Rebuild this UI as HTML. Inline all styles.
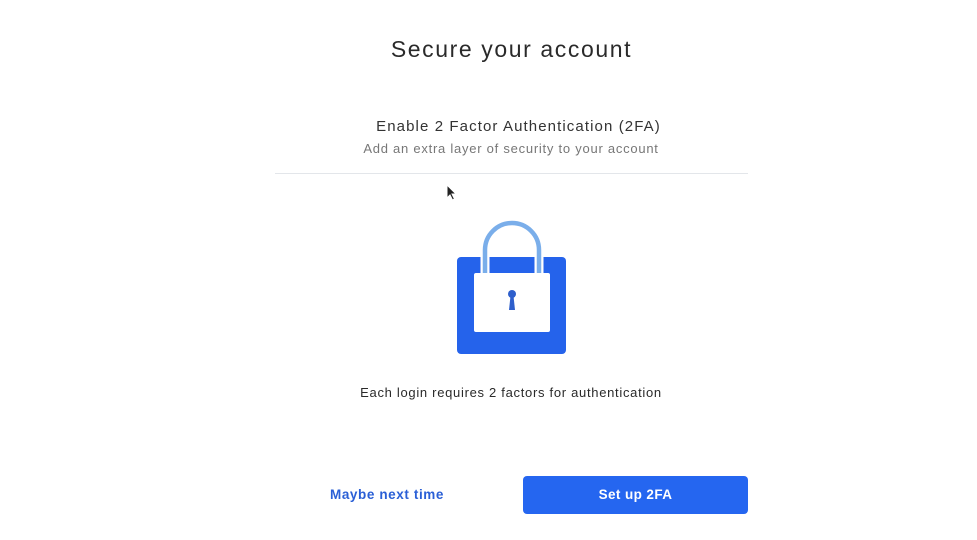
<!DOCTYPE html>
<html><head><style>
body{margin:0;width:977px;height:540px;background:#fff;font-family:"Liberation Sans",sans-serif;position:relative;overflow:hidden;color:#222}
.a{position:absolute;text-align:center}
</style></head><body>
<div class="a" style="left:0;width:1023px;top:36px;font-size:23px;color:#2a2a2a;letter-spacing:1.6px">Secure your account</div>
<div class="a" style="left:0;width:1037px;top:118px;font-size:15px;color:#333;letter-spacing:1.1px">Enable 2 Factor Authentication (2FA)</div>
<div class="a" style="left:0;width:1022px;top:141px;font-size:13px;color:#777;letter-spacing:0.75px">Add an extra layer of security to your account</div>
<div style="position:absolute;left:275px;top:173px;width:473px;height:1px;background:#e3e6ea"></div>
<svg style="position:absolute;left:446px;top:184px" width="12" height="18" viewBox="0 0 12 18"><path d="M1 1 L1 14 L4 11 L6.5 16 L8.5 15 L6 10 L10 10 Z" fill="#222" stroke="#fff" stroke-width="1"/></svg>
<svg style="position:absolute;left:440px;top:210px" width="140" height="150" viewBox="0 0 140 150">
<rect x="17" y="47" width="109" height="97" rx="4" fill="#2563eb"/>
<rect x="34" y="63" width="76" height="59" rx="2" fill="#fff"/>
<path d="M45 63 V40 A27 27 0 0 1 99 40 V63" fill="none" stroke="#fff" stroke-width="9"/>
<path d="M45 63 V40 A27 27 0 0 1 99 40 V63" fill="none" stroke="#7aaeea" stroke-width="4.5"/>
<circle cx="72" cy="84" r="4" fill="#2e5fcc"/>
<path d="M70.5 86 L69 100 H75 L73.5 86 Z" fill="#2e5fcc"/>
</svg>
<div class="a" style="left:0;width:1022px;top:385px;font-size:13px;color:#2a2a2a;letter-spacing:0.7px">Each login requires 2 factors for authentication</div>
<div class="a" style="left:326px;width:122px;top:487px;font-size:13.5px;font-weight:bold;color:#2a5fd6;letter-spacing:0.6px">Maybe next time</div>
<div class="a" style="left:523px;width:225px;top:476px;height:38px;line-height:38px;background:#2566f0;border-radius:4px;color:#fff;font-size:13.5px;font-weight:bold;letter-spacing:0.4px">Set up 2FA</div>
</body></html>
